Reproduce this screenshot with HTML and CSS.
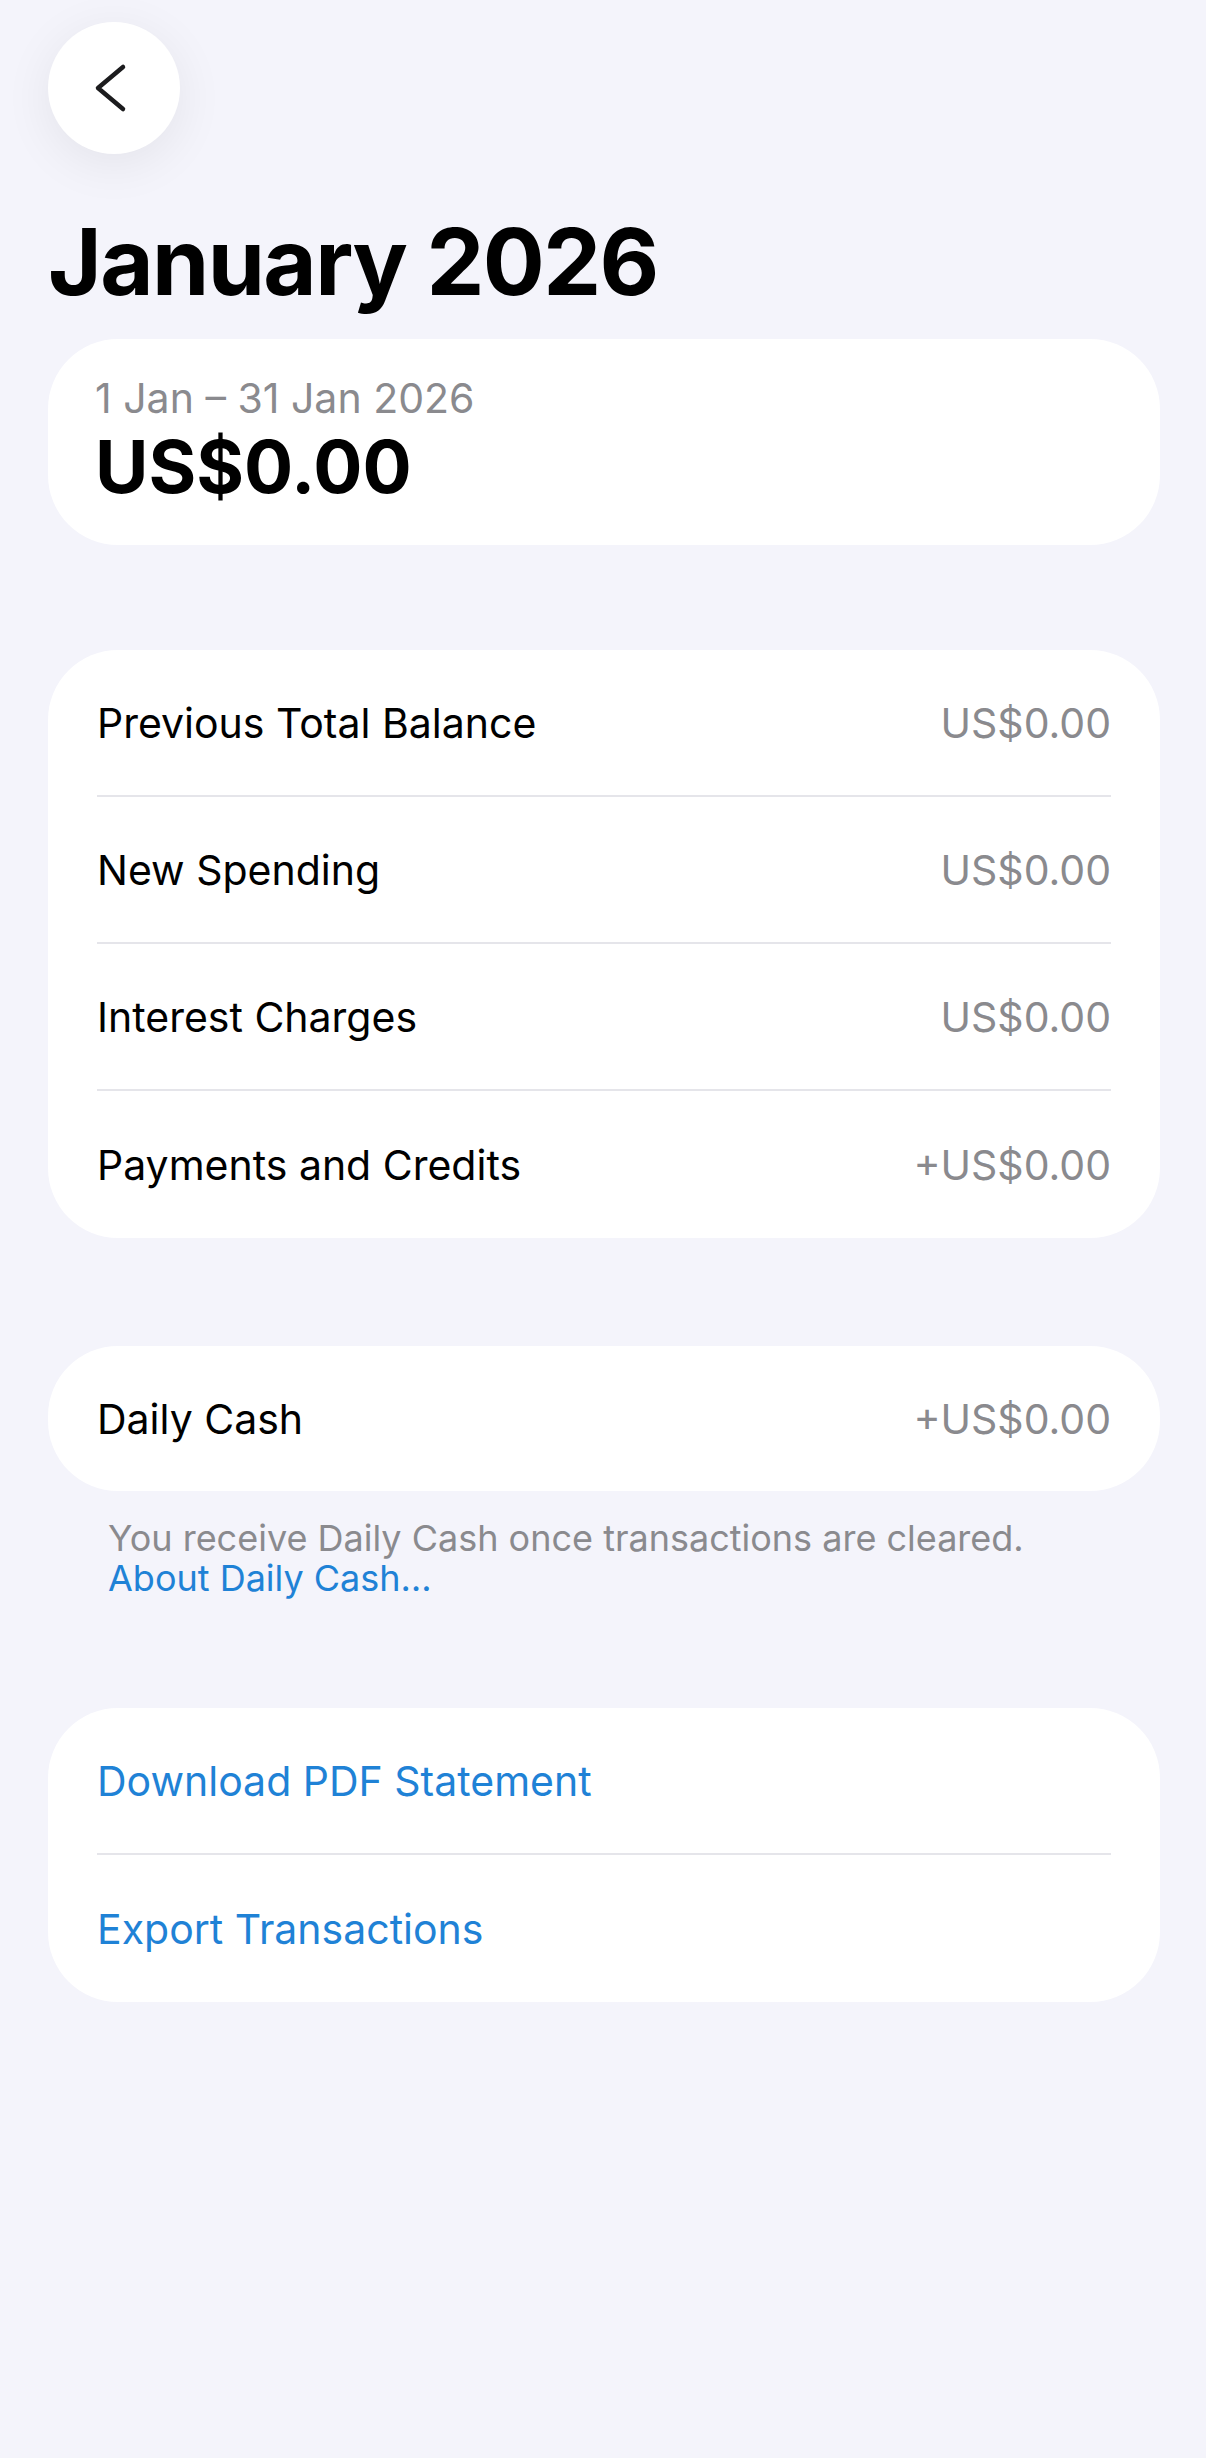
FILE: index.html
```html
<!DOCTYPE html>
<html lang="en">
    <head>
        <meta charset="UTF-8" />
        <meta name="viewport" content="width=device-width, initial-scale=1.0" />
        <title>January 2026 | Statement</title>

        <link rel="stylesheet" href="styles.css">
    </head>
    <body>
        <div class="screen">
            <div class="top-bar">
                <button class="back-btn" aria-label="Back">
                    <svg width="132" height="132" viewBox="0 0 132 132" fill="none">
                        <path d="M75 45 L50 66 L75 87" stroke="#1c1c1e" stroke-width="4.5" stroke-linecap="round" stroke-linejoin="round" />
                    </svg>
                </button>
            </div>

            <h1 class="page-title">January 2026</h1>

            <div class="card summary-card">
                <div class="period">1 Jan – 31 Jan 2026</div>
                <div class="total">US$0.00</div>
            </div>

            <div class="card list-card">
                <div class="row">
                    <span class="label">Previous Total Balance</span>
                    <span class="value">US$0.00</span>
                </div>
                <div class="row">
                    <span class="label">New Spending</span>
                    <span class="value">US$0.00</span>
                </div>
                <div class="row">
                    <span class="label">Interest Charges</span>
                    <span class="value">US$0.00</span>
                </div>
                <div class="row">
                    <span class="label">Payments and Credits</span>
                    <span class="value">+US$0.00</span>
                </div>
            </div>

            <div class="card list-card cash-card">
                <div class="row">
                    <span class="label">Daily Cash</span>
                    <span class="value">+US$0.00</span>
                </div>
            </div>
            <p class="footnote">
                You receive Daily Cash once transactions are cleared.<br />
                <a href="#">About Daily Cash…</a>
            </p>

            <div class="card list-card actions-card">
                <a class="row action" href="#">Download PDF Statement</a>
                <a class="row action" href="#">Export Transactions</a>
            </div>
        </div>
    </body>
</html>
```

FILE: styles.css
```css
* {
    box-sizing: border-box;
}
body {
    margin: 0;
    min-height: 100vh;
    background-color: #f4f4fb;
    font-family: "Inter", "Roboto", "Liberation Sans", sans-serif;
    color: #000000;
}
.screen {
    padding: 22px 46px 80px 48px;
}
.top-bar {
    display: flex;
}
.back-btn {
    width: 132px;
    height: 132px;
    padding: 0;
    border: none;
    border-radius: 50%;
    background-color: #ffffff;
    box-shadow: 0 10px 50px rgba(0, 0, 0, 0.07);
    display: flex;
    align-items: center;
    justify-content: center;
}
.page-title {
    margin: 61px 0 0;
    font-size: 92px;
    line-height: 94px;
    font-weight: 700;
    letter-spacing: -1.6px;
}
.card {
    background-color: #ffffff;
    border-radius: 70px;
}
.summary-card {
    margin-top: 30px;
    padding: 35px 47px 38px;
}
.period {
    font-size: 41px;
    line-height: 48px;
    color: #8a8a8e;
}
.total {
    margin-top: 5px;
    font-size: 73px;
    line-height: 80px;
    font-weight: 700;
}
.list-card {
    margin-top: 105px;
    padding: 0 49px;
}
.row {
    display: flex;
    justify-content: space-between;
    align-items: center;
    height: 147px;
    font-size: 41px;
    border-bottom: 2px solid #e5e5ea;
}
.row:last-child {
    border-bottom: none;
}
.value {
    color: #8a8a8e;
}
.cash-card {
    margin-top: 108px;
}
.cash-card .row {
    height: 145px;
}
.footnote {
    margin: 27px 0 0;
    padding: 0 60px;
    font-size: 36px;
    line-height: 40px;
    color: #8a8a8e;
}
.footnote a {
    color: #1f82d6;
    text-decoration: none;
}
.actions-card {
    margin-top: 110px;
}
.action {
    color: #1f82d6;
    text-decoration: none;
}
```
